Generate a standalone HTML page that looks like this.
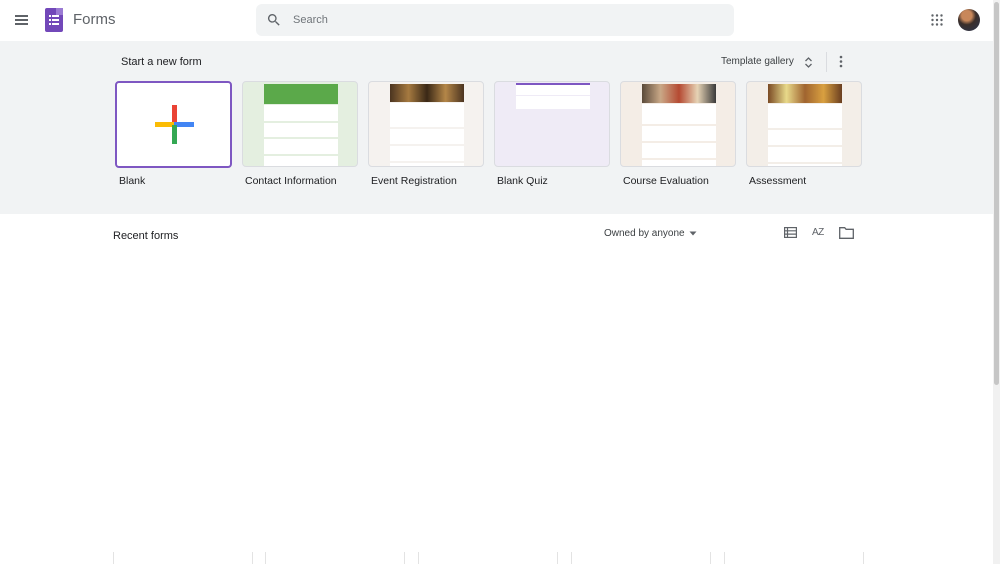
<!DOCTYPE html>
<html><head><style>
*{margin:0;padding:0;box-sizing:border-box}
body{width:1000px;height:564px;overflow:hidden;background:#fff;font-family:"Liberation Sans",sans-serif;position:relative;color:#202124}
.abs{position:absolute}
.top{left:0;top:0;width:993px;height:41px;background:#fff}
.gray{left:0;top:41px;width:993px;height:173px;background:#f1f3f4}
.sb{left:993px;top:0;width:7px;height:564px;background:#f1f1f1}
.sbt{left:994px;top:2px;width:5px;height:383px;background:#c6c6c6;border-radius:3px}
.card{top:81px;width:116px;height:86px;border:1px solid #dadce0;border-radius:4px;overflow:hidden}
.lbl{top:175px;font-size:10.5px;color:#202124}
.pg{position:absolute;left:21px;width:74px;background:#fff}
.ln{position:absolute;height:1px;background:#e8e8e8}
.bl{position:absolute;top:552px;width:1px;height:12px;background:#e3e3e3}
</style></head><body>
<div class="abs top"></div>
<div class="abs gray"></div>
<div class="abs sb"></div><div class="abs sbt"></div>
<div class="abs" style="left:15px;top:15px;width:13px;height:2px;background:#5f6368"></div>
<div class="abs" style="left:15px;top:19px;width:13px;height:2px;background:#5f6368"></div>
<div class="abs" style="left:15px;top:23px;width:13px;height:2px;background:#5f6368"></div>
<div class="abs" style="left:45px;top:8px;width:18px;height:24px;background:#7248b9;border-radius:2px"></div>
<div class="abs" style="left:56px;top:8px;width:7px;height:7px;background:#9a7ad3"></div>
<div class="abs" style="left:49px;top:15px;width:10px;height:10px">
<div class="abs" style="left:0;top:0;width:2px;height:2px;background:#fff"></div><div class="abs" style="left:3px;top:0;width:7px;height:2px;background:#fff"></div>
<div class="abs" style="left:0;top:4px;width:2px;height:2px;background:#fff"></div><div class="abs" style="left:3px;top:4px;width:7px;height:2px;background:#fff"></div>
<div class="abs" style="left:0;top:8px;width:2px;height:2px;background:#fff"></div><div class="abs" style="left:3px;top:8px;width:7px;height:2px;background:#fff"></div>
</div>
<div class="abs" style="left:73px;top:11px;font-size:15px;color:#5f6368">Forms</div>
<div class="abs" style="left:256px;top:4px;width:478px;height:32px;background:#f1f3f4;border-radius:6px"></div>
<svg class="abs" style="left:266px;top:12px" width="16" height="16" viewBox="0 0 24 24"><path d="M15.5 14h-.8l-.3-.3A6.5 6.5 0 1 0 9.5 16a6.5 6.5 0 0 0 4.2-1.6l.3.3v.8l5 5 1.5-1.5-5-5zm-6 0a4.5 4.5 0 1 1 0-9 4.5 4.5 0 0 1 0 9z" fill="#5f6368"/></svg>
<div class="abs" style="left:293px;top:14px;font-size:11px;color:#70757a">Search</div>
<svg class="abs" style="left:931px;top:14px" width="12" height="12" viewBox="0 0 12 12" fill="#5f6368"><circle cx="1.5" cy="1.5" r="1.2"/><circle cx="6" cy="1.5" r="1.2"/><circle cx="10.5" cy="1.5" r="1.2"/><circle cx="1.5" cy="6" r="1.2"/><circle cx="6" cy="6" r="1.2"/><circle cx="10.5" cy="6" r="1.2"/><circle cx="1.5" cy="10.5" r="1.2"/><circle cx="6" cy="10.5" r="1.2"/><circle cx="10.5" cy="10.5" r="1.2"/></svg>
<div class="abs" style="left:958px;top:9px;width:22px;height:22px;border-radius:50%;background:radial-gradient(circle at 40% 30%,#c8875a 0 25%,#3a2e2a 45%,#2a3550 100%)"></div>
<div class="abs" style="left:121px;top:56px;font-size:11px">Start a new form</div>
<div class="abs" style="left:721px;top:56px;font-size:10px;color:#3c4043">Template gallery</div>
<svg class="abs" style="left:804px;top:56px" width="9" height="13" viewBox="0 0 9 13"><path d="M1.5 5L4.5 2 7.5 5M1.5 8l3 3 3-3" stroke="#5f6368" stroke-width="1.3" fill="none"/></svg>
<div class="abs" style="left:826px;top:52px;width:1px;height:20px;background:#dadce0"></div>
<svg class="abs" style="left:839px;top:55px" width="4" height="13" viewBox="0 0 4 13" fill="#5f6368"><circle cx="2" cy="2" r="1.3"/><circle cx="2" cy="6.5" r="1.3"/><circle cx="2" cy="11" r="1.3"/></svg>
<div class="abs card" style="left:115px;width:117px;height:87px;border:2px solid #7e57c2;background:#fff">
<div class="abs" style="left:55px;top:22px;width:5px;height:19px;background:#ea4335"></div>
<div class="abs" style="left:38px;top:39px;width:20px;height:5px;background:#fbbc04"></div>
<div class="abs" style="left:57px;top:39px;width:20px;height:5px;background:#4285f4"></div>
<div class="abs" style="left:55px;top:42px;width:5px;height:19px;background:#34a853"></div>
</div>
<div class="abs card" style="left:242px;background:#e4efe0">
<div class="pg" style="top:2px;height:20px;background:#5ba94a"></div>
<div class="pg" style="top:23px;height:63px"><div class="ln" style="left:0;top:16px;width:74px;background:#e4efe0;height:2px"></div><div class="ln" style="left:0;top:32px;width:74px;background:#e4efe0;height:2px"></div><div class="ln" style="left:0;top:49px;width:74px;background:#e4efe0;height:2px"></div></div>
</div>
<div class="abs card" style="left:368px;background:#f5f2ef">
<div class="pg" style="top:2px;height:18px;background:linear-gradient(90deg,#4b3420,#a67a40,#3a2816,#b48648,#4b3420)"></div>
<div class="pg" style="top:21px;height:65px"><div class="ln" style="left:0;top:24px;width:74px;background:#f5f2ef;height:2px"></div><div class="ln" style="left:0;top:41px;width:74px;background:#f5f2ef;height:2px"></div><div class="ln" style="left:0;top:58px;width:74px;background:#f5f2ef;height:2px"></div></div>
</div>
<div class="abs card" style="left:494px;background:#efebf6">
<div class="pg" style="top:1px;height:12px;border-top:2px solid #7e57c2"></div>
<div class="pg" style="top:14px;height:13px"></div>
</div>
<div class="abs card" style="left:620px;background:#f4ede6">
<div class="pg" style="top:2px;height:19px;background:linear-gradient(90deg,#5a4a3a,#c9a887,#b54a32,#e6d3b5,#3a3a3a)"></div>
<div class="pg" style="top:22px;height:64px"><div class="ln" style="left:0;top:20px;width:74px;background:#f4ede6;height:2px"></div><div class="ln" style="left:0;top:37px;width:74px;background:#f4ede6;height:2px"></div><div class="ln" style="left:0;top:54px;width:74px;background:#f4ede6;height:2px"></div></div>
</div>
<div class="abs card" style="left:746px;background:#f3eee8">
<div class="pg" style="top:2px;height:19px;background:linear-gradient(90deg,#7a4a24,#e8d98a,#a0642f,#d9a040,#6a3e20)"></div>
<div class="pg" style="top:22px;height:64px"><div class="ln" style="left:0;top:24px;width:74px;background:#f3eee8;height:2px"></div><div class="ln" style="left:0;top:41px;width:74px;background:#f3eee8;height:2px"></div><div class="ln" style="left:0;top:58px;width:74px;background:#f3eee8;height:2px"></div></div>
</div>
<div class="abs lbl" style="left:119px">Blank</div>
<div class="abs lbl" style="left:245px">Contact Information</div>
<div class="abs lbl" style="left:371px">Event Registration</div>
<div class="abs lbl" style="left:497px">Blank Quiz</div>
<div class="abs lbl" style="left:623px">Course Evaluation</div>
<div class="abs lbl" style="left:749px">Assessment</div>
<div class="abs" style="left:113px;top:230px;font-size:11px">Recent forms</div>
<div class="abs" style="left:604px;top:228px;font-size:10px;color:#3c4043">Owned by anyone</div>
<svg class="abs" style="left:689px;top:231px" width="8" height="5" viewBox="0 0 8 5"><path d="M0.5 0.5h7L4 4.5z" fill="#5f6368"/></svg>
<svg class="abs" style="left:784px;top:227px" width="13" height="11" viewBox="0 0 13 11"><rect x="0.6" y="0.6" width="11.8" height="9.8" fill="none" stroke="#5f6368" stroke-width="1.2"/><path d="M0.6 3.8h11.8M0.6 7.1h11.8M3.5 0.6v9.8" stroke="#5f6368" stroke-width="1.2"/></svg>
<div class="abs" style="left:812px;top:227px;font-size:10px;color:#5f6368;letter-spacing:-0.5px">AZ</div>
<svg class="abs" style="left:839px;top:227px" width="15" height="12" viewBox="0 0 15 12"><path d="M0.7 0.7h5l1.4 1.6h7.2v9H0.7z" fill="none" stroke="#5f6368" stroke-width="1.3"/></svg>
<div class="bl" style="left:113px"></div><div class="bl" style="left:252px"></div><div class="bl" style="left:265px"></div><div class="bl" style="left:404px"></div><div class="bl" style="left:418px"></div><div class="bl" style="left:557px"></div><div class="bl" style="left:571px"></div><div class="bl" style="left:710px"></div><div class="bl" style="left:724px"></div><div class="bl" style="left:863px"></div>
</body></html>
